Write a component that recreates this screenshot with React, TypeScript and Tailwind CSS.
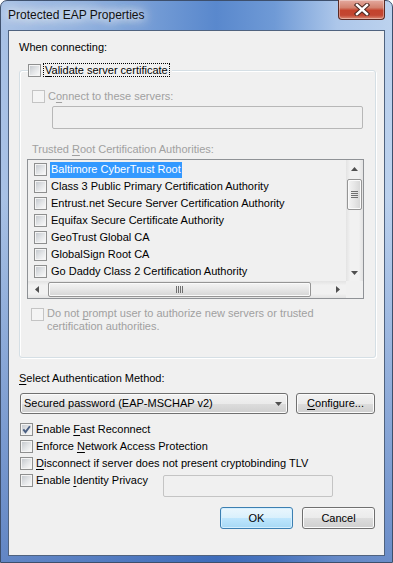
import type { ReactNode } from 'react'

const certs = [
  'Baltimore CyberTrust Root',
  'Class 3 Public Primary Certification Authority',
  'Entrust.net Secure Server Certification Authority',
  'Equifax Secure Certificate Authority',
  'GeoTrust Global CA',
  'GlobalSign Root CA',
  'Go Daddy Class 2 Certification Authority',
]

const U = ({ children }: { children: ReactNode }) => (
  <span className="underline underline-offset-2">{children}</span>
)

function Box({
  checked = false,
  disabled = false,
}: {
  checked?: boolean
  disabled?: boolean
}) {
  if (disabled) {
    return (
      <span className="block h-[13px] w-[13px] shrink-0 border border-[#c4c4c4] bg-[#f4f4f4]" />
    )
  }

  return (
    <span className="relative flex h-[13px] w-[13px] shrink-0 items-center justify-center border border-[#8e8f8f] bg-[#f4f4f4]">
      <span className="block h-[9px] w-[9px] bg-[linear-gradient(135deg,#c6cacf,#e4e6e8_55%,#f8f8f8)]" />
      {checked && (
        <svg
          className="absolute left-0 top-0"
          width="11"
          height="11"
          viewBox="0 0 11 11"
        >
          <path
            d="M2.3 5.4 L4.5 8.1 L8.9 2.3"
            fill="none"
            stroke="#4a5f82"
            strokeWidth="1.9"
          />
        </svg>
      )}
    </span>
  )
}

function Arrow({ dir }: { dir: 'up' | 'down' | 'left' | 'right' }) {
  const d = {
    up: 'M3.5 0 L7 4 L0 4Z',
    down: 'M0 0 L7 0 L3.5 4Z',
    left: 'M0 3.5 L4 0 L4 7Z',
    right: 'M0 0 L4 3.5 L0 7Z',
  }[dir]
  const w = dir === 'up' || dir === 'down' ? 7 : 4
  const h = dir === 'up' || dir === 'down' ? 4 : 7

  return (
    <svg width={w} height={h} viewBox={`0 0 ${w} ${h}`}>
      <path d={d} fill="#4f4f4f" />
    </svg>
  )
}

const btn =
  'flex h-[22px] w-[73px] items-center justify-center rounded-[3px] border border-[#707070] bg-[linear-gradient(180deg,#f2f2f2_0%,#ebebeb_50%,#dddddd_51%,#cfcfcf_100%)] shadow-[inset_0_0_0_1px_#fbfbfb]'

export default function App() {
  return (
    <div className="h-[563px] w-[393px] overflow-hidden bg-white font-['Liberation_Sans',Arial,sans-serif] text-[11px] leading-[13px] text-black">
      <div className="flex h-full w-full flex-col rounded-t-[7px] border border-[#3d4f6c] bg-[linear-gradient(180deg,rgba(255,255,255,0)_0%,rgba(255,255,255,0)_35%,rgba(40,85,170,0.55)_100%),linear-gradient(90deg,#a9c2e5_0%,#8fb0de_22%,#5988cd_55%,#6f9ad6_70%,#adc7ea_86%,#bcd2ee_100%)] px-[7px] pb-[6px]">
        {/* title bar */}
        <div className="flex h-[29px] shrink-0 items-start justify-between">
          <span className="mt-[7px] text-[12px] leading-[15px] text-[#111] [text-shadow:0_0_8px_#fff,0_0_12px_#fff,0_0_18px_rgba(255,255,255,0.9)]">
            Protected EAP Properties
          </span>
          <div className="-mt-[1px] flex h-[20px] w-[47px] items-center justify-center rounded-b-[4px] border border-t-0 border-[#5b2a23] bg-[linear-gradient(180deg,#e4aa9f_0%,#d3826f_40%,#c4432d_55%,#c24632_80%,#dc8a74_100%)] shadow-[inset_0_0_0_1px_rgba(255,255,255,0.35)]">
            <svg width="16" height="13" viewBox="0 0 16 13">
              <path
                d="M3 2 L13 11 M13 2 L3 11"
                stroke="#4a2620"
                strokeWidth="4.4"
                strokeLinecap="square"
              />
              <path
                d="M3 2 L13 11 M13 2 L3 11"
                stroke="#fff"
                strokeWidth="2.4"
                strokeLinecap="square"
              />
            </svg>
          </div>
        </div>

        {/* client area */}
        <div className="flex h-[526px] shrink-0 flex-col border border-[#50637f] bg-[#f0f0f0] pl-[10px] pr-[8px] pt-[10px]">
          <div>When connecting:</div>

          <div className="mt-[16px] flex h-[288px] flex-col rounded-[3px] border border-[#d5dfe5] shadow-[inset_1px_1px_0_#fff,1px_1px_0_#fff]">
            <div className="-mt-[8px] ml-[8px] flex h-[14px] w-fit items-center bg-[#f0f0f0] pr-[2px]">
              <Box />
              <span className="ml-[2px] border border-dotted border-black px-[1px] leading-[12px]">
                <U>V</U>alidate server certificate
              </span>
            </div>

            <div className="ml-[12px] mt-[13px] flex h-[13px] items-center gap-[3px] text-[#a0a0a0]">
              <Box disabled />
              <span>
                C<U>o</U>nnect to these servers:
              </span>
            </div>

            <div className="ml-[32px] mt-[3px] h-[23px] w-[311px] rounded-[2px] border border-[#b7b7b7] bg-[#f0f0f0]" />

            <div className="ml-[12px] mt-[14px] text-[#a0a0a0]">
              Trusted <U>R</U>oot Certification Authorities:
            </div>

            <div className="ml-[7px] mt-[3px] flex h-[140px] w-[337px] flex-col border border-[#8f9296] bg-[#f0f0f0]">
              <div className="flex h-[121px]">
                <div className="flex-1 overflow-hidden whitespace-nowrap pt-[1px]">
                  {certs.map((c, i) => (
                    <div key={c} className="flex h-[17px] items-center pl-[6px]">
                      <Box />
                      <span
                        className={`ml-[3px] flex h-[16px] items-center px-[1px] ${
                          i === 0 ? 'bg-[#3399ff] text-white' : ''
                        }`}
                      >
                        {c}
                      </span>
                    </div>
                  ))}
                </div>
                <div className="flex w-[17px] flex-col items-center bg-[linear-gradient(90deg,#e3e3e3,#f1f1f1_25%,#f1f1f1_75%,#e3e3e3)]">
                  <div className="flex h-[17px] items-center justify-center">
                    <Arrow dir="up" />
                  </div>
                  <div className="mt-[2px] flex h-[31px] w-[15px] items-center justify-center rounded-[2px] border border-[#959595] bg-[linear-gradient(90deg,#f4f4f4,#e6e6e6_50%,#d5d5d5)] shadow-[inset_0_0_0_1px_#fafafa]">
                    <svg width="7" height="7" viewBox="0 0 7 7">
                      <path
                        d="M0 0.5 H7 M0 2.5 H7 M0 4.5 H7 M0 6.5 H7"
                        stroke="#6f6f6f"
                        strokeWidth="1"
                      />
                    </svg>
                  </div>
                  <div className="flex-1" />
                  <div className="flex h-[17px] items-center justify-center">
                    <Arrow dir="down" />
                  </div>
                </div>
              </div>
              <div className="flex h-[17px]">
                <div className="flex flex-1 items-center bg-[linear-gradient(180deg,#e3e3e3,#f1f1f1_25%,#f1f1f1_75%,#e3e3e3)]">
                  <div className="flex h-[17px] w-[17px] items-center justify-center">
                    <Arrow dir="left" />
                  </div>
                  <div className="ml-[3px] flex h-[15px] w-[263px] items-center justify-center rounded-[2px] border border-[#959595] bg-[linear-gradient(180deg,#f4f4f4,#e6e6e6_50%,#d5d5d5)] shadow-[inset_0_0_0_1px_#fafafa]">
                    <svg width="7" height="7" viewBox="0 0 7 7">
                      <path
                        d="M0.5 0 V7 M2.5 0 V7 M4.5 0 V7 M6.5 0 V7"
                        stroke="#6f6f6f"
                        strokeWidth="1"
                      />
                    </svg>
                  </div>
                  <div className="flex-1" />
                  <div className="flex h-[17px] w-[17px] items-center justify-center">
                    <Arrow dir="right" />
                  </div>
                </div>
                <div className="w-[17px] bg-[#f0f0f0]" />
              </div>
            </div>

            <div className="ml-[11px] mt-[8px] flex items-start gap-[3px] text-[#a0a0a0]">
              <span className="mt-[1px]">
                <Box disabled />
              </span>
              <span>
                Do not <U>p</U>rompt user to authorize new servers or trusted
                <br />
                certification authorities.
              </span>
            </div>
          </div>

          <div className="mt-[14px]">
            <U>S</U>elect Authentication Method:
          </div>

          <div className="ml-[1px] mt-[8px] flex h-[21px] items-center">
            <div className="flex h-[21px] w-[268px] items-center justify-between rounded-[3px] border border-[#707070] bg-[linear-gradient(180deg,#f2f2f2_0%,#ebebeb_50%,#dddddd_51%,#cfcfcf_100%)] pl-[3px] pr-[5px] shadow-[inset_0_0_0_1px_#fbfbfb]">
              <span>Secured password (EAP-MSCHAP v2)</span>
              <Arrow dir="down" />
            </div>
            <div className="ml-[8px] flex h-[21px] w-[79px] items-center justify-center rounded-[3px] border border-[#707070] bg-[linear-gradient(180deg,#f2f2f2_0%,#ebebeb_50%,#dddddd_51%,#cfcfcf_100%)] shadow-[inset_0_0_0_1px_#fbfbfb]">
              <span>
                <U>C</U>onfigure...
              </span>
            </div>
          </div>

          <div className="ml-[1px] mt-[7px] flex flex-col">
            <div className="flex h-[17px] items-center gap-[3px]">
              <Box checked />
              <span>
                Enable <U>F</U>ast Reconnect
              </span>
            </div>
            <div className="flex h-[17px] items-center gap-[3px]">
              <Box />
              <span>
                Enforce <U>N</U>etwork Access Protection
              </span>
            </div>
            <div className="flex h-[17px] items-center gap-[3px]">
              <Box />
              <span>
                <U>D</U>isconnect if server does not present cryptobinding TLV
              </span>
            </div>
            <div className="flex items-start">
              <div className="flex h-[17px] w-[143px] items-center gap-[3px]">
                <Box />
                <span>
                  Enable <U>I</U>dentity Privacy
                </span>
              </div>
              <div className="mt-[3px] h-[22px] w-[170px] rounded-[2px] border border-[#c4c4c4] bg-[#f0f0f0]" />
            </div>
          </div>

          <div className="mt-[10px] flex justify-end gap-[9px] pr-[1px]">
            <div className="flex h-[22px] w-[73px] items-center justify-center rounded-[3px] border border-[#3c7fb1] bg-[linear-gradient(180deg,#eaf6fd_0%,#d9f0fc_50%,#bee6fd_51%,#a7d9f5_100%)] shadow-[inset_0_0_0_1px_#d4efff]">
              OK
            </div>
            <div className={btn}>Cancel</div>
          </div>
        </div>
      </div>
    </div>
  )
}
